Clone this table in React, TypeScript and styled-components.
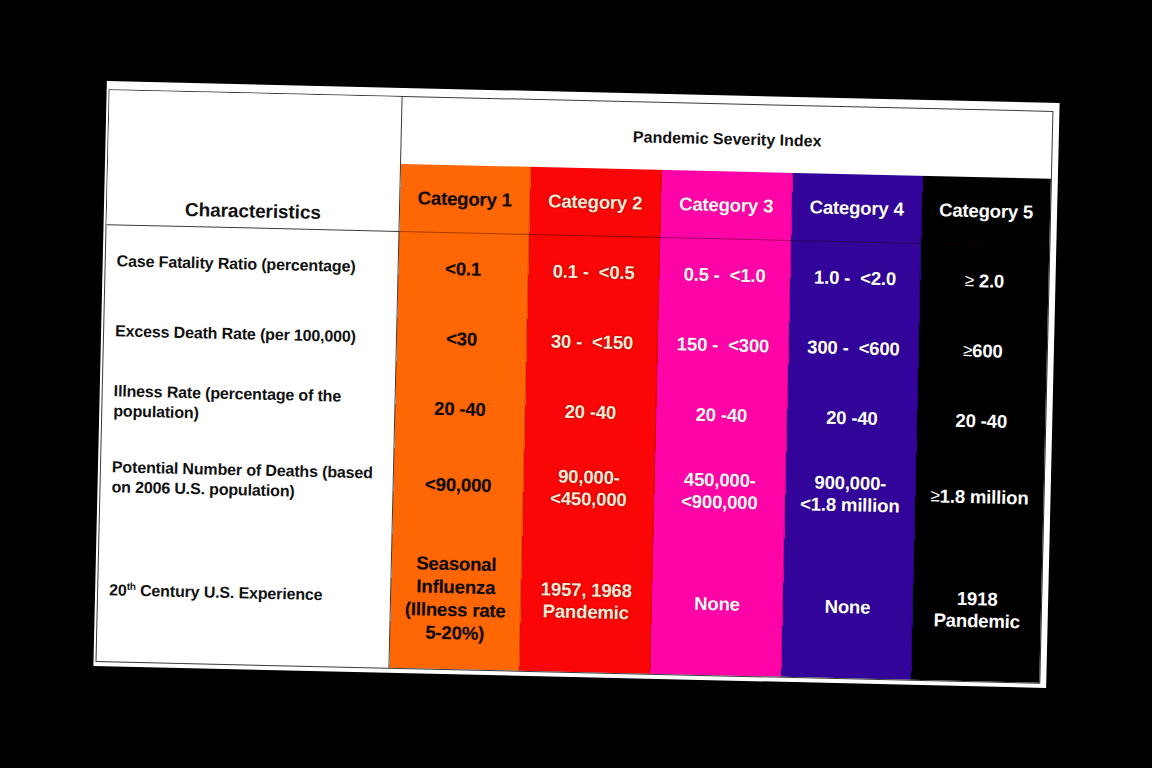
import React from "react";
import styled, { createGlobalStyle } from "styled-components";

const GlobalStyle = createGlobalStyle`
  html, body {
    margin: 0;
    padding: 0;
    background: #000;
  }
  body {
    font-family: "Liberation Sans", Arial, sans-serif;
  }
  * { box-sizing: border-box; }
`;

type Tone = 1 | 2 | 3 | 4 | 5;

const tones: Record<Tone, { bg: string; fg: string; shadow: string }> = {
  1: { bg: "#ff6604", fg: "#0b0b0b", shadow: "0 0 1px rgba(120,40,0,0.35)" },
  2: { bg: "#fb0606", fg: "#fbe9d6", shadow: "0 0 1px #7a0000, 0 0 2px rgba(90,0,0,0.5)" },
  3: { bg: "#ff05a8", fg: "#fff6fb", shadow: "0 0 1px rgba(80,0,40,0.6)" },
  4: { bg: "#32049a", fg: "#ffffff", shadow: "0 0 1px rgba(0,0,0,0.5)" },
  5: { bg: "#000000", fg: "#ffffff", shadow: "none" },
};

const LABEL_W = 293;
const COL_W = [130, 131, 131, 130, 129];
const TITLE_H = 67;

/* Continuous colour bands for the five category columns, painted once on the
   table so that rows don't leave seams between cells. */
const bandGradient = (() => {
  const stops: string[] = [`#fff 0 ${LABEL_W}px`];
  let x = LABEL_W;
  COL_W.forEach((w, i) => {
    const c = tones[(i + 1) as Tone].bg;
    stops.push(`${c} ${x}px ${x + w}px`);
    x += w;
  });
  return `linear-gradient(to right, ${stops.join(", ")})`;
})();

const Stage = styled.div`
  width: 100vw;
  height: 100vh;
  display: flex;
  align-items: center;
  justify-content: center;
  overflow: hidden;
`;

const Card = styled.div`
  width: 953px;
  height: 585px;
  flex: none;
  background: #fff;
  padding: 8px 6px 4px 2px;
  transform: rotate(1.32deg);
`;

const Table = styled.div`
  height: 100%;
  display: grid;
  grid-template-columns: ${LABEL_W}px ${COL_W.map((w) => `${w}px`).join(" ")};
  grid-template-rows: ${TITLE_H}px 68px 71px 70px 70px 82px 143px;
  border: 1px solid #3a3a3a;
  font-weight: 700;
  background: ${bandGradient} 0 ${TITLE_H}px / 100% calc(100% - ${TITLE_H}px) no-repeat, #fff;
`;

const CornerCell = styled.div`
  grid-row: 1 / span 2;
  grid-column: 1;
  display: flex;
  align-items: flex-end;
  justify-content: center;
  padding-bottom: 5px;
  background: #fff;
  border-right: 1px solid #3a3a3a;
  border-bottom: 1px solid #3a3a3a;
  font-size: 19px;
  color: #111;
  letter-spacing: -0.1px;
`;

const TitleCell = styled.div`
  grid-row: 1;
  grid-column: 2 / span 5;
  display: flex;
  align-items: center;
  justify-content: center;
  font-size: 16px;
  color: #111;
  padding-top: 2px;
`;

const CategoryHeader = styled.div<{ $tone: Tone }>`
  grid-row: 2;
  display: flex;
  align-items: center;
  justify-content: center;
  font-size: 18.6px;
  letter-spacing: -0.2px;
  color: ${(p) => tones[p.$tone].fg};
  text-shadow: ${(p) => tones[p.$tone].shadow};
  border-bottom: 1px solid rgba(40, 0, 0, 0.4);
  border-right: 1px solid rgba(0, 0, 0, 0.22);
`;

const LabelCell = styled.div`
  grid-column: 1;
  display: flex;
  align-items: center;
  padding-left: 11px;
  border-right: 1px solid #3a3a3a;
  font-size: 16px;
  line-height: 20px;
  color: #111;
  letter-spacing: -0.15px;

  sup {
    font-size: 10px;
    line-height: 0;
    vertical-align: 6px;
  }
`;

const ValueCell = styled.div<{ $tone: Tone }>`
  display: flex;
  align-items: center;
  justify-content: center;
  text-align: center;
  font-size: 18.6px;
  line-height: 22px;
  letter-spacing: -0.2px;
  white-space: pre;
  color: ${(p) => tones[p.$tone].fg};
  text-shadow: ${(p) => tones[p.$tone].shadow};
  border-right: 1px solid rgba(0, 0, 0, 0.22);
`;

const Geq = styled.span`
  font-weight: 400;
  font-size: 17px;
`;

const Stack = styled.div<{ $lh?: number }>`
  line-height: ${(p) => p.$lh ?? 22}px;
`;

type Row = { label: React.ReactNode; values: React.ReactNode[] };

const rows: Row[] = [
  {
    label: "Case Fatality Ratio (percentage)",
    values: [
      "<0.1",
      "0.1 -  <0.5",
      "0.5 -  <1.0",
      "1.0 -  <2.0",
      <>
        <Geq>≥</Geq> 2.0
      </>,
    ],
  },
  {
    label: "Excess Death Rate (per 100,000)",
    values: [
      "<30",
      "30 -  <150",
      "150 -  <300",
      "300 -  <600",
      <>
        <Geq>≥</Geq>600
      </>,
    ],
  },
  {
    label: (
      <div>
        Illness Rate (percentage of the
        <br />
        population)
      </div>
    ),
    values: ["20 -40", "20 -40", "20 -40", "20 -40", "20 -40"],
  },
  {
    label: (
      <div>
        Potential Number of Deaths (based
        <br />
        on 2006 U.S. population)
      </div>
    ),
    values: [
      "<90,000",
      <Stack>
        90,000-
        <br />
        {"<450,000"}
      </Stack>,
      <Stack>
        450,000-
        <br />
        {"<900,000"}
      </Stack>,
      <Stack>
        900,000-
        <br />
        {"<1.8 million"}
      </Stack>,
      <>
        <Geq>≥</Geq>1.8 million
      </>,
    ],
  },
  {
    label: (
      <div>
        20<sup>th</sup> Century U.S. Experience
      </div>
    ),
    values: [
      <Stack $lh={23}>
        Seasonal
        <br />
        Influenza
        <br />
        (Illness rate
        <br />
        5-20%)
      </Stack>,
      <Stack>
        1957, 1968
        <br />
        Pandemic
      </Stack>,
      "None",
      "None",
      <Stack>
        1918
        <br />
        Pandemic
      </Stack>,
    ],
  },
];

const categories: Tone[] = [1, 2, 3, 4, 5];

export default function App() {
  return (
    <>
      <GlobalStyle />
      <Stage>
        <Card>
          <Table>
            <CornerCell>Characteristics</CornerCell>
            <TitleCell>Pandemic Severity Index</TitleCell>
            {categories.map((c) => (
              <CategoryHeader key={c} $tone={c}>
                Category {c}
              </CategoryHeader>
            ))}
            {rows.map((row, i) => (
              <React.Fragment key={i}>
                <LabelCell>{row.label}</LabelCell>
                {row.values.map((v, j) => (
                  <ValueCell key={j} $tone={categories[j]}>
                    {v}
                  </ValueCell>
                ))}
              </React.Fragment>
            ))}
          </Table>
        </Card>
      </Stage>
    </>
  );
}
